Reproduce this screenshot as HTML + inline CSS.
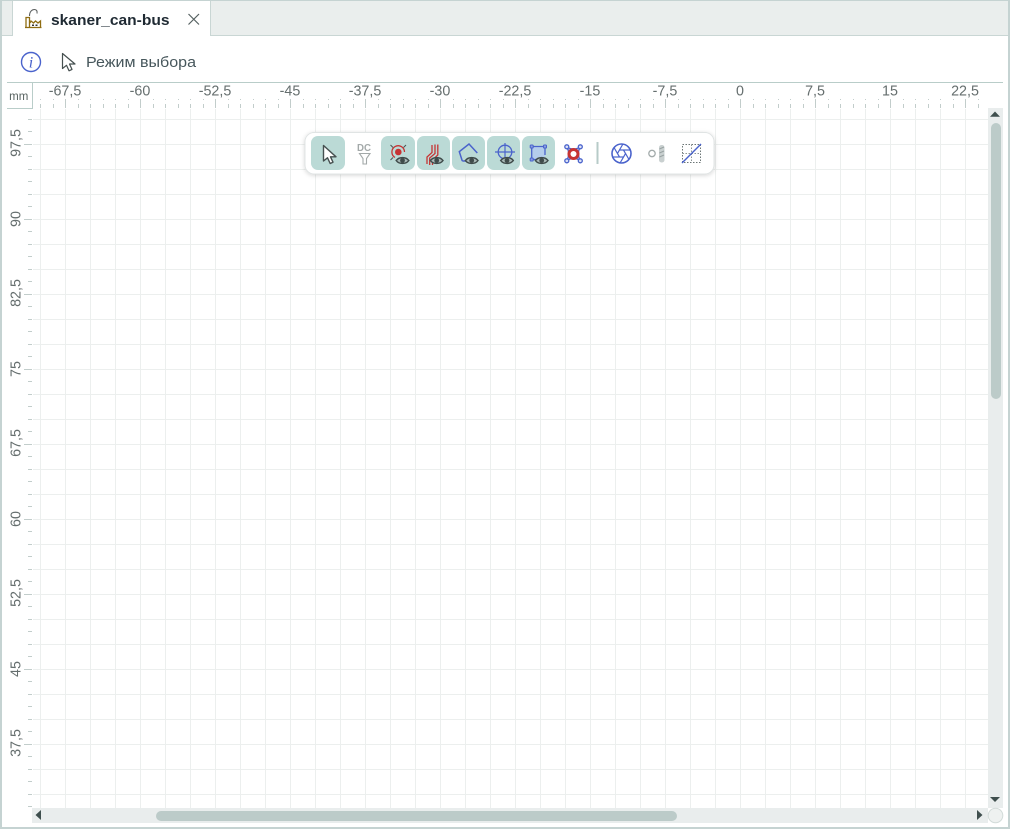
<!DOCTYPE html>
<html><head><meta charset="utf-8"><style>
html,body{margin:0;padding:0;background:#fff}
svg{display:block}
text{font-family:"Liberation Sans",sans-serif}
</style></head><body>
<svg width="1010" height="829" viewBox="0 0 1010 829" xmlns="http://www.w3.org/2000/svg" style="position:absolute;left:0;top:0">
<defs>
<pattern id="g" patternUnits="userSpaceOnUse" x="40" y="119" width="25" height="25"><rect x="0" y="0" width="1" height="25" fill="#ecefee"/><rect x="0" y="0" width="25" height="1" fill="#ecefee"/></pattern>
<pattern id="tx" patternUnits="userSpaceOnUse" x="40" y="100" width="25" height="8"><rect x="0" y="4" width="1" height="4" fill="#c2cdcb"/><rect x="13" y="4" width="1" height="4" fill="#c2cdcb"/></pattern>
<pattern id="txm" patternUnits="userSpaceOnUse" x="65" y="99" width="75" height="9"><rect x="0" y="0" width="1" height="9" fill="#c2cdcb"/></pattern>
<pattern id="ty" patternUnits="userSpaceOnUse" x="28" y="119" width="5" height="25"><rect x="0" y="0" width="4" height="1" fill="#c2cdcb"/><rect x="0" y="12" width="4" height="1" fill="#c2cdcb"/></pattern>
<pattern id="tym" patternUnits="userSpaceOnUse" x="24" y="144" width="10" height="75"><rect x="0" y="0" width="8" height="1" fill="#c2cdcb"/></pattern>
<g id="eye"><path d="M-6.300 0C-3.500-3.900 3.500-3.900 6.300 0C3.500 3.900-3.500 3.900-6.300 0Z" fill="#a8b8b6" stroke="#3f4b4a" stroke-width="1.500"/><circle r="2.400" fill="#3f4b4a"/></g>
<filter id="sh" x="-5%" y="-20%" width="110%" height="150%"><feDropShadow dx="0" dy="1" stdDeviation="2" flood-color="#000" flood-opacity=".16"/></filter>
</defs>

<!-- frame & tab bar -->
<rect width="1010" height="829" fill="#fff"/>
<rect x="2" y="1" width="1006" height="35" fill="#eaeeed"/>
<rect x="2" y="35" width="1006" height="1" fill="#c9d6d4"/>
<rect x="13" y="1" width="197" height="35" fill="#fff"/>
<rect x="12" y="1" width="1" height="35" fill="#c9d6d4"/>
<rect x="210" y="1" width="1" height="35" fill="#c9d6d4"/>
<rect x="0" y="0" width="1010" height="1" fill="#c5d3d2"/>
<rect x="0" y="0" width="2" height="829" fill="#c5d3d2"/>
<rect x="1008" y="0" width="2" height="829" fill="#c5d3d2"/>
<rect x="0" y="827" width="1010" height="2" fill="#c5d3d2"/>

<!-- tab icon -->
<g fill="none">
<path d="M26 27V17.500H29.500V27" stroke="#8f6d12" stroke-width="1.300"/>
<path d="M25 27.500H41.500M30 23L31 21L33.500 23L35.500 21L38 23L40.500 21V27" stroke="#8f6d12" stroke-width="1.300"/>
<path d="M29.500 16C29.500 11.500 32 9.500 34.500 9.500C36.500 9.500 37.500 11 37 13.500" stroke="#5b5f5f" stroke-width="1.100"/>
</g>
<path d="M32 24.500h2v1.500h-2zM35.500 24.500h2v1.500h-2z" fill="#333"/>
<text x="51" y="25" font-size="15" font-weight="700" fill="#1f2a33" textLength="118.500" lengthAdjust="spacingAndGlyphs">skaner_can-bus</text>
<path d="M188.500 14L199 24.500M199 14L188.500 24.500" stroke="#566161" stroke-width="1.200" fill="none"/>

<!-- second row -->
<circle cx="31" cy="62" r="9.500" fill="none" stroke="#4a63cc" stroke-width="1.400"/>
<text x="31" y="67.500" font-size="16" font-style="italic" text-anchor="middle" fill="#4a63cc" style="font-family:'Liberation Serif',serif">i</text>
<path d="M62.500 53.500V68.500L66.500 65.300L69 70.800L72 69.400L69.500 64H75Z" fill="#fff" stroke="#465050" stroke-width="1.200" stroke-linejoin="round"/>
<text x="86" y="67" font-size="15" fill="#47575c" textLength="110" lengthAdjust="spacingAndGlyphs">Режим выбора</text>

<!-- ruler -->
<rect x="7" y="82" width="996" height="1" fill="#b9cdc9"/>
<rect x="32" y="83" width="1" height="25" fill="#b9cdc9"/>
<rect x="7" y="108" width="26" height="1" fill="#b9cdc9"/>
<text x="18.700" y="100" font-size="11.500" text-anchor="middle" fill="#56615f">mm</text>

<rect x="33" y="109" width="955" height="699" fill="url(#g)"/>
<rect x="33" y="99" width="955" height="9" fill="url(#tx)"/>
<rect x="33" y="99" width="955" height="9" fill="url(#txm)"/>
<rect x="28" y="109" width="5" height="699" fill="url(#ty)"/>
<rect x="24" y="109" width="9" height="699" fill="url(#tym)"/>

<g font-size="14.300" fill="#656e6e" text-anchor="middle">
<text x="65" y="95.500">-67,5</text><text x="140" y="95.500">-60</text><text x="215" y="95.500">-52,5</text><text x="290" y="95.500">-45</text><text x="365" y="95.500">-37,5</text><text x="440" y="95.500">-30</text><text x="515" y="95.500">-22,5</text><text x="590" y="95.500">-15</text><text x="665" y="95.500">-7,5</text><text x="740" y="95.500">0</text><text x="815" y="95.500">7,5</text><text x="890" y="95.500">15</text><text x="965" y="95.500">22,5</text>
<text transform="translate(20.500 143) rotate(-90)">97,5</text>
<text transform="translate(20.500 219) rotate(-90)">90</text>
<text transform="translate(20.500 293) rotate(-90)">82,5</text>
<text transform="translate(20.500 369) rotate(-90)">75</text>
<text transform="translate(20.500 443) rotate(-90)">67,5</text>
<text transform="translate(20.500 519) rotate(-90)">60</text>
<text transform="translate(20.500 593) rotate(-90)">52,5</text>
<text transform="translate(20.500 669) rotate(-90)">45</text>
<text transform="translate(20.500 743) rotate(-90)">37,5</text>
</g>

<!-- scrollbars -->
<rect x="988" y="108" width="15" height="700" fill="#e9eded"/>
<rect x="32" y="808" width="956" height="15" fill="#e9eded"/>
<rect x="991" y="123" width="10" height="276" rx="5" fill="#bccbc9"/>
<rect x="156" y="811" width="521" height="10" rx="5" fill="#bccbc9"/>
<path d="M995 111.500L1000 116.700H990Z" fill="#3f4f4e"/>
<path d="M995 802L1000 797H990Z" fill="#3f4f4e"/>
<path d="M35.500 815L41 810V820Z" fill="#3f4f4e"/>
<path d="M982.500 815L977 810V820Z" fill="#3f4f4e"/>
<circle cx="995.500" cy="815.500" r="7.300" fill="#eef1f0" stroke="#d2dbd9"/>

<!-- floating toolbar -->
<rect x="305" y="132.500" width="409" height="41.500" rx="9" fill="#fff" stroke="#e0e4e4" filter="url(#sh)"/>
<g fill="#bbdad6">
<rect x="311" y="136" width="34" height="34" rx="7"/>
<rect x="381" y="136" width="34" height="34" rx="7"/>
<rect x="417" y="136" width="33" height="34" rx="7"/>
<rect x="452" y="136" width="33" height="34" rx="7"/>
<rect x="487" y="136" width="33" height="34" rx="7"/>
<rect x="522" y="136" width="33" height="34" rx="7"/>
</g>
<rect x="596.500" y="142" width="2" height="22" fill="#b7cbc8"/>

<!-- select arrow -->
<path d="M323.500 145.500V161L327.500 157.800L330.200 163.500L333 162.200L330.500 156.800H336Z" fill="#fff" stroke="#465050" stroke-width="1.400" stroke-linejoin="round"/>

<!-- DC filter -->
<text x="357" y="151" font-size="10" font-weight="700" fill="#a3a9a9" textLength="14" lengthAdjust="spacingAndGlyphs">DC</text>
<path d="M359.500 153.500H370L366.500 158.500V164H363V158.500Z" fill="none" stroke="#a3a9a9" stroke-width="1.100"/>

<!-- target eye -->
<path d="M395 157.500A6.300 6.300 0 1 1 404.500 152" fill="none" stroke="#c63333" stroke-width="1.300"/>
<circle cx="398.300" cy="152" r="3.300" fill="#c63333"/>
<path d="M390.500 145L393 147.500M406 145L403.500 147.500M390.500 160L393 157.500" stroke="#4a5554" stroke-width="1" fill="none"/>
<use href="#eye" x="402.500" y="160.500"/>

<!-- lines eye -->
<path d="M427 164V157L432 152.500V145M429.700 165V158L435 153.500V144.500M432.500 165V160L437.800 155V144.500" fill="none" stroke="#c63333" stroke-width="1.300"/>
<use href="#eye" x="436.700" y="160.500"/>

<!-- pentagon eye -->
<path d="M462.300 161L459.300 151.700L469 144L477.300 153" fill="none" stroke="#4a63cc" stroke-width="1.500"/>
<path d="M462.300 161H466" fill="none" stroke="#4a63cc" stroke-width="1.500"/>
<use href="#eye" x="471.700" y="160.500"/>

<!-- crosshair eye -->
<circle cx="505" cy="152" r="6.800" fill="none" stroke="#4a63cc" stroke-width="1.300"/>
<path d="M495 152H515M505 143V162" stroke="#4a63cc" stroke-width="1.200" fill="none"/>
<use href="#eye" x="507" y="160.500"/>

<!-- rect eye -->
<rect x="532" y="146.500" width="13" height="12.500" fill="#b4cdec"/>
<path d="M531.700 146.500H545V155M531.700 146.500V159.500H536" fill="none" stroke="#4a63cc" stroke-width="1.300"/>
<g fill="#8aa0e0" stroke="#4a63cc"><rect x="530.200" y="145" width="3" height="3" rx=".8"/><rect x="543.500" y="145" width="3" height="3" rx=".8"/><rect x="530.200" y="158" width="3" height="3" rx=".8"/></g>
<use href="#eye" x="541.700" y="160.500"/>

<!-- red target -->
<path d="M566.800 147Q573.500 151 580.300 147Q576.500 153.500 580.300 160.500Q573.500 156.500 566.800 160.500Q570.500 153.500 566.800 147Z" fill="#b9c6ee" stroke="#4a63cc" stroke-width="1.300"/>
<g fill="#dde3f6" stroke="#4a63cc" stroke-width="1.300"><circle cx="566.800" cy="146.800" r="2"/><circle cx="580.300" cy="146.800" r="2"/><circle cx="566.800" cy="160.800" r="2"/><circle cx="580.300" cy="160.800" r="2"/></g>
<circle cx="573.500" cy="154" r="4.500" fill="#fff" stroke="#c63333" stroke-width="3"/>

<!-- aperture -->
<g transform="translate(621.500 153.500)" fill="none" stroke="#4a63cc">
<circle r="9.500" stroke-width="1.600"/>
<g stroke-width="1.200">
<path d="M-2-3.500H8.800"/><path d="M-2-3.500H8.800" transform="rotate(60)"/><path d="M-2-3.500H8.800" transform="rotate(120)"/><path d="M-2-3.500H8.800" transform="rotate(180)"/><path d="M-2-3.500H8.800" transform="rotate(240)"/><path d="M-2-3.500H8.800" transform="rotate(300)"/>
</g>
</g>

<!-- grey ring & drill -->
<circle cx="652" cy="153.500" r="3.200" fill="none" stroke="#a3abab" stroke-width="1.300"/>
<rect x="659" y="145" width="5.500" height="17.500" rx="2.500" fill="#c9d0d0"/>
<path d="M659.500 149L664 147M659.500 153L664 151M659.500 157L664 155" stroke="#98a2a2" stroke-width="1"/>

<!-- dotted square -->
<rect x="682.500" y="144.500" width="18" height="18" fill="none" stroke="#6d7777" stroke-width="1" stroke-dasharray="1.500 1.500"/>
<path d="M682.500 153.500H700.500M691.500 144.500V162.500" fill="none" stroke="#8d9696" stroke-width="1" stroke-dasharray="1.500 1.500"/>
<path d="M682 163L701 144" stroke="#4a63cc" stroke-width="1.400"/>
</svg>
</body></html>
